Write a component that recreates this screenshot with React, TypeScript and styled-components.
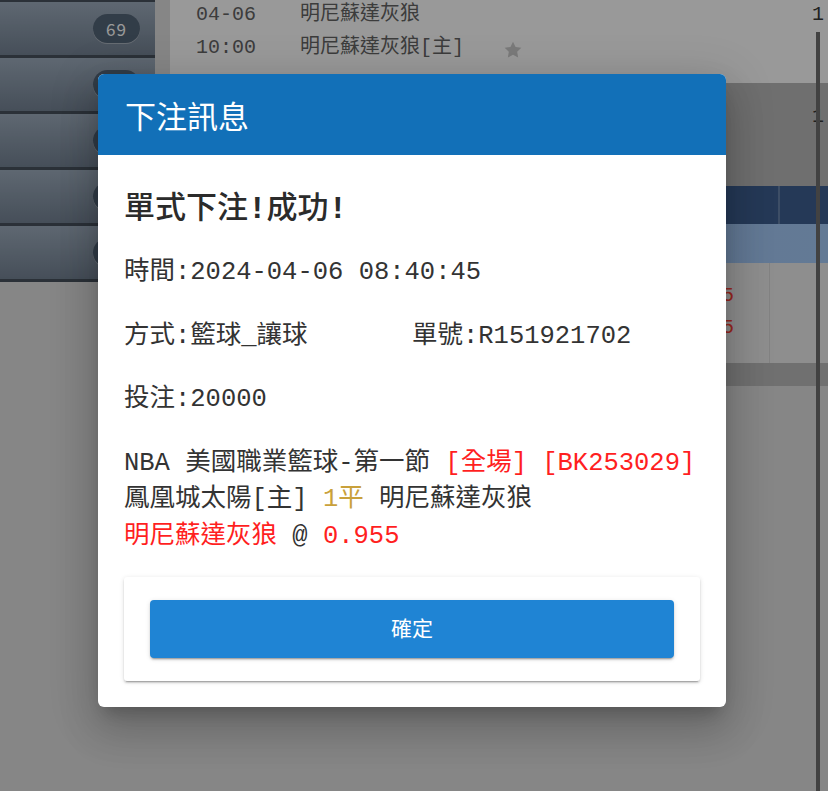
import React from "react";
import styled, { createGlobalStyle } from "styled-components";

const GlobalStyle = createGlobalStyle`
  html, body { margin: 0; padding: 0; }
  body { background: #dcdcdc; font-family: "Noto Sans CJK TC", "Noto Sans", sans-serif; }
  * { box-sizing: border-box; }
`;

const MONO = `"Liberation Mono", "Noto Sans CJK TC", monospace`;
const SANS = `"Noto Sans CJK TC", "Noto Sans", sans-serif`;

/* ---------- background page ---------- */

const Page = styled.div`
  position: relative;
  width: 828px;
  height: 791px;
  overflow: hidden;
  display: flex;
  background: #dcdcdc;
`;

const Sidebar = styled.nav`
  width: 155px;
  flex: none;
  align-self: flex-start;
  display: flex;
  flex-direction: column;
  border-top: 2px solid #343f4d;
`;

const SideItem = styled.div`
  height: 56px;
  display: flex;
  align-items: center;
  justify-content: flex-end;
  padding: 0 15px 1px 0;
  background: linear-gradient(#93a4b6, #667689);
  border-bottom: 3px solid #343f4d;
`;

const CountBadge = styled.span`
  width: 47px;
  height: 29px;
  border-radius: 15px;
  display: flex;
  align-items: center;
  justify-content: center;
  background: #425569;
  box-shadow: 0 1px 0 rgba(255, 255, 255, 0.35);
  color: #ffffff;
  font-family: ${SANS};
  font-size: 17px;
  letter-spacing: 1px;
`;

const Main = styled.main`
  flex: 1;
  min-width: 0;
  display: flex;
  flex-direction: column;
  padding-left: 15px;
`;

const MatchPanel = styled.div<{ $tone?: "light" | "dark"; $h: number; $pt: number }>`
  height: ${(p) => p.$h}px;
  padding-top: ${(p) => p.$pt}px;
  background: ${(p) => (p.$tone === "dark" ? "#b1b1b1" : "#ffffff")};
  font-family: ${MONO};
  font-size: 20px;
  line-height: 33px;
  color: #535353;
`;

const MatchLine = styled.div`
  display: grid;
  grid-template-columns: 26px 104px 512px 1fr;
  align-items: center;
  white-space: nowrap;
`;

const Cell = styled.span<{ $dark?: boolean }>`
  display: flex;
  align-items: center;
  gap: 39px;
  color: ${(p) => (p.$dark ? "#222222" : "inherit")};
`;

const StarIcon = () => (
  <svg width="20" height="20" viewBox="0 0 24 24" style={{ marginTop: 4 }}>
    <path
      d="M12 2l3.09 6.26L22 9.27l-5 4.87 1.18 6.88L12 17.77l-6.18 3.25L7 14.14 2 9.27l6.91-1.01L12 2z"
      fill="#c6c6c6"
    />
  </svg>
);

const TableHead = styled.div`
  height: 38px;
  display: grid;
  grid-template-columns: 610px 1fr;
  background: #2a4f85;
`;

const HeadCell = styled.div<{ $divider?: boolean }>`
  border-right: ${(p) => (p.$divider ? "2px solid #5575a1" : "none")};
`;

const SubHead = styled.div`
  height: 39px;
  background: linear-gradient(90deg, #90bcf0, #9cc6f8);
`;

const OddsRow = styled.div`
  height: 100px;
  display: grid;
  grid-template-columns: 600px 1fr;
  background: #ebebeb;
`;

const OddsCell = styled.div<{ $divider?: boolean }>`
  padding: 17px 35px 0 0;
  text-align: right;
  border-right: ${(p) => (p.$divider ? "1px solid #d4d4d4" : "none")};
  font-family: ${MONO};
  font-size: 20px;
  line-height: 32px;
  color: #ff2d20;
`;

const FooterStrip = styled.div`
  height: 23px;
  background: #b3b3b3;
`;

const ScrollBar = styled.div`
  position: absolute;
  left: 816px;
  top: 32px;
  bottom: 0;
  width: 4px;
  background: #5f5f5f;
`;

/* ---------- dialog ---------- */

const Overlay = styled.div`
  position: absolute;
  inset: 0;
  background: rgba(33, 33, 33, 0.46);
  display: flex;
  justify-content: center;
  align-items: flex-start;
  padding: 74px 4px 0 0;
`;

const Dialog = styled.section`
  width: 628px;
  background: #ffffff;
  border-radius: 6px;
  overflow: hidden;
  box-shadow: 0 11px 15px -7px rgba(0, 0, 0, 0.2), 0 24px 38px 3px rgba(0, 0, 0, 0.14),
    0 9px 46px 8px rgba(0, 0, 0, 0.12);
`;

const DialogHeader = styled.header`
  height: 81px;
  display: flex;
  align-items: center;
  padding-left: 27px;
  background: #1270b8;
  color: #ffffff;
  font-family: ${SANS};
  font-size: 31px;
  font-weight: 400;
`;

const DialogBody = styled.div`
  padding: 30px 26px 26px;
  display: flex;
  flex-direction: column;
  gap: 27px;
  font-family: ${MONO};
  font-size: 25.5px;
  line-height: 36.5px;
  color: #333333;
`;

const ResultTitle = styled.h2`
  margin: 3px 0 -3px;
  font-size: 31px;
  line-height: 43px;
  font-weight: 500;
  color: #2b2b2b;
`;

const Bang = styled.span`
  font-weight: 700;
`;

const InfoRow = styled.div`
  display: grid;
  grid-template-columns: 1fr 1fr;
  white-space: nowrap;
`;

const Detail = styled.div`
  display: flex;
  flex-direction: column;
  white-space: nowrap;
`;

const Tone = styled.span<{ $tone: "red" | "gold" }>`
  color: ${(p) => (p.$tone === "red" ? "#ff1f1f" : "#c9a13b")};
`;

const ActionCard = styled.div`
  margin-top: -5px;
  padding: 23px 26px;
  background: #ffffff;
  border-radius: 3px;
  box-shadow: 0 3px 1px -2px rgba(0, 0, 0, 0.2), 0 2px 2px 0 rgba(0, 0, 0, 0.14),
    0 1px 5px 0 rgba(0, 0, 0, 0.12);
`;

const ConfirmButton = styled.button`
  display: flex;
  align-items: center;
  justify-content: center;
  width: 100%;
  height: 58px;
  padding: 0 0 5px;
  border: none;
  border-radius: 4px;
  background: #1f84d4;
  color: #ffffff;
  font-family: ${SANS};
  font-size: 21px;
  font-weight: 400;
  cursor: pointer;
  box-shadow: 0 3px 1px -2px rgba(0, 0, 0, 0.2), 0 2px 2px 0 rgba(0, 0, 0, 0.14),
    0 1px 5px 0 rgba(0, 0, 0, 0.12);
`;

const sideCounts = ["69", "24", "12", "8", "3"];

export default function App() {
  return (
    <>
      <GlobalStyle />
      <Page>
        <Sidebar>
          {sideCounts.map((c) => (
            <SideItem key={c}>
              <CountBadge>{c}</CountBadge>
            </SideItem>
          ))}
        </Sidebar>
        <Main>
          <MatchPanel $h={85} $pt={0} style={{ marginTop: -2 }}>
            <MatchLine>
              <span />
              <Cell>04-06</Cell>
              <Cell>明尼蘇達灰狼</Cell>
              <Cell $dark>1</Cell>
            </MatchLine>
            <MatchLine>
              <span />
              <Cell>10:00</Cell>
              <Cell>
                明尼蘇達灰狼[主]
                <StarIcon />
              </Cell>
              <Cell />
            </MatchLine>
          </MatchPanel>
          <MatchPanel $tone="dark" $h={103} $pt={17}>
            <MatchLine>
              <span />
              <Cell />
              <Cell />
              <Cell $dark>1</Cell>
            </MatchLine>
          </MatchPanel>
          <TableHead>
            <HeadCell $divider />
            <HeadCell />
          </TableHead>
          <SubHead />
          <OddsRow>
            <OddsCell $divider>
              0.955
              <br />
              0.955
            </OddsCell>
            <OddsCell />
          </OddsRow>
          <FooterStrip />
        </Main>
        <ScrollBar />

        <Overlay>
          <Dialog>
            <DialogHeader>下注訊息</DialogHeader>
            <DialogBody>
              <ResultTitle>
                單式下注<Bang>!</Bang>成功<Bang>!</Bang>
              </ResultTitle>
              <InfoRow>
                <span>時間:2024-04-06 08:40:45</span>
              </InfoRow>
              <InfoRow>
                <span>方式:籃球_讓球</span>
                <span>單號:R151921702</span>
              </InfoRow>
              <InfoRow>
                <span>投注:20000</span>
              </InfoRow>
              <Detail>
                <div>
                  NBA 美國職業籃球-第一節 <Tone $tone="red">[全場]</Tone>{" "}
                  <Tone $tone="red">[BK253029]</Tone>
                </div>
                <div>
                  鳳凰城太陽[主] <Tone $tone="gold">1平</Tone> 明尼蘇達灰狼
                </div>
                <div>
                  <Tone $tone="red">明尼蘇達灰狼</Tone> @ <Tone $tone="red">0.955</Tone>
                </div>
              </Detail>
              <ActionCard>
                <ConfirmButton type="button">確定</ConfirmButton>
              </ActionCard>
            </DialogBody>
          </Dialog>
        </Overlay>
      </Page>
    </>
  );
}
